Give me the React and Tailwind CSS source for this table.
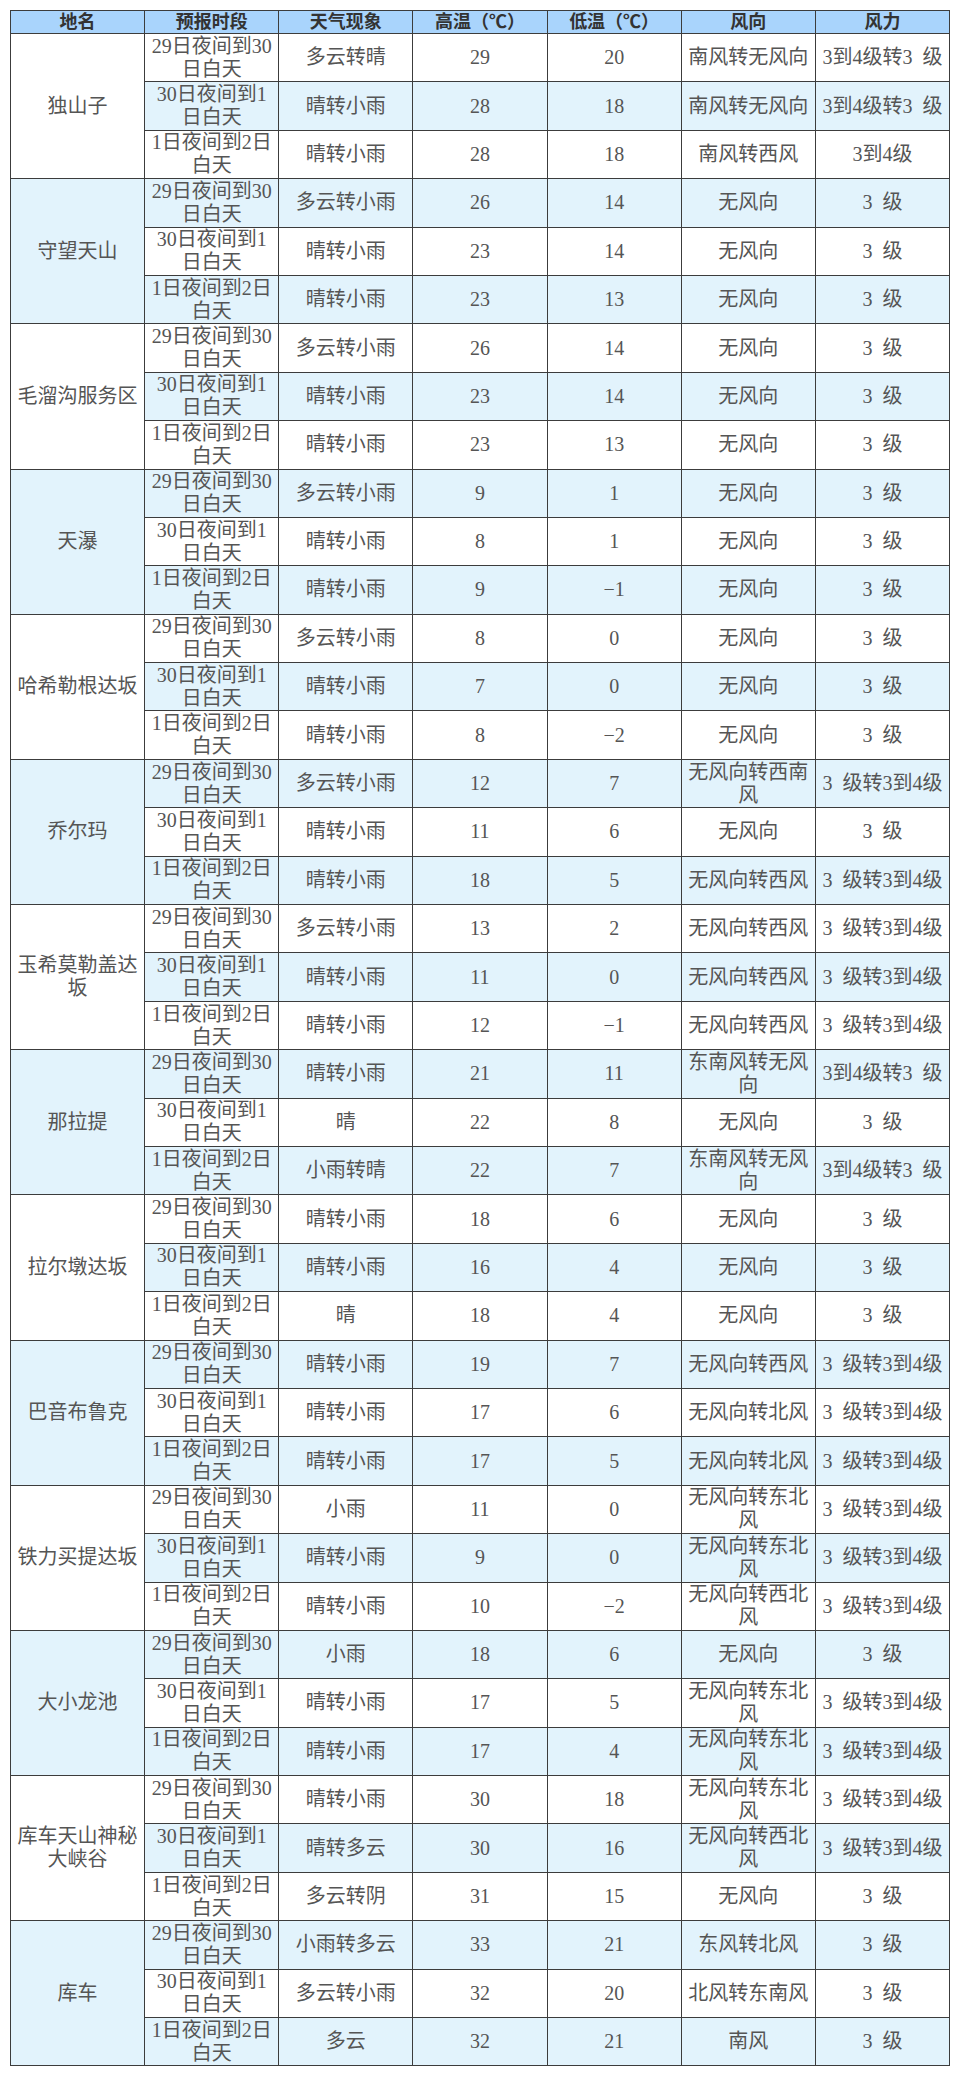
const periods = ["29日夜间到30日白天", "30日夜间到1日白天", "1日夜间到2日白天"];

const A = "3到4级转3\u2002级";
const B = "3\u2002级转3到4级";
const C = "3\u2002级";

const places = [
  ["独山子", [
    ["多云转晴", "29", "20", "南风转无风向", A],
    ["晴转小雨", "28", "18", "南风转无风向", A],
    ["晴转小雨", "28", "18", "南风转西风", "3到4级"],
  ]],
  ["守望天山", [
    ["多云转小雨", "26", "14", "无风向", C],
    ["晴转小雨", "23", "14", "无风向", C],
    ["晴转小雨", "23", "13", "无风向", C],
  ]],
  ["毛溜沟服务区", [
    ["多云转小雨", "26", "14", "无风向", C],
    ["晴转小雨", "23", "14", "无风向", C],
    ["晴转小雨", "23", "13", "无风向", C],
  ]],
  ["天瀑", [
    ["多云转小雨", "9", "1", "无风向", C],
    ["晴转小雨", "8", "1", "无风向", C],
    ["晴转小雨", "9", "−1", "无风向", C],
  ]],
  ["哈希勒根达坂", [
    ["多云转小雨", "8", "0", "无风向", C],
    ["晴转小雨", "7", "0", "无风向", C],
    ["晴转小雨", "8", "−2", "无风向", C],
  ]],
  ["乔尔玛", [
    ["多云转小雨", "12", "7", "无风向转西南风", B],
    ["晴转小雨", "11", "6", "无风向", C],
    ["晴转小雨", "18", "5", "无风向转西风", B],
  ]],
  ["玉希莫勒盖达坂", [
    ["多云转小雨", "13", "2", "无风向转西风", B],
    ["晴转小雨", "11", "0", "无风向转西风", B],
    ["晴转小雨", "12", "−1", "无风向转西风", B],
  ]],
  ["那拉提", [
    ["晴转小雨", "21", "11", "东南风转无风向", A],
    ["晴", "22", "8", "无风向", C],
    ["小雨转晴", "22", "7", "东南风转无风向", A],
  ]],
  ["拉尔墩达坂", [
    ["晴转小雨", "18", "6", "无风向", C],
    ["晴转小雨", "16", "4", "无风向", C],
    ["晴", "18", "4", "无风向", C],
  ]],
  ["巴音布鲁克", [
    ["晴转小雨", "19", "7", "无风向转西风", B],
    ["晴转小雨", "17", "6", "无风向转北风", B],
    ["晴转小雨", "17", "5", "无风向转北风", B],
  ]],
  ["铁力买提达坂", [
    ["小雨", "11", "0", "无风向转东北风", B],
    ["晴转小雨", "9", "0", "无风向转东北风", B],
    ["晴转小雨", "10", "−2", "无风向转西北风", B],
  ]],
  ["大小龙池", [
    ["小雨", "18", "6", "无风向", C],
    ["晴转小雨", "17", "5", "无风向转东北风", B],
    ["晴转小雨", "17", "4", "无风向转东北风", B],
  ]],
  ["库车天山神秘大峡谷", [
    ["晴转小雨", "30", "18", "无风向转东北风", B],
    ["晴转多云", "30", "16", "无风向转西北风", B],
    ["多云转阴", "31", "15", "无风向", C],
  ]],
  ["库车", [
    ["小雨转多云", "33", "21", "东风转北风", C],
    ["多云转小雨", "32", "20", "北风转东南风", C],
    ["多云", "32", "21", "南风", C],
  ]],
];

const headers = ["地名", "预报时段", "天气现象", "高温（℃）", "低温（℃）", "风向", "风力"];

const cell = "border border-[#3c3c3c] px-[3px] py-0 h-[48.4px] text-center align-middle";

export default function App() {
  return (
    <div
      className="bg-white w-[960px] min-h-[2084px] pt-[10px] pl-[10px] text-[#555] text-[20px] leading-[23px]"
      style={{ fontFamily: '"Liberation Serif", "Noto Sans CJK SC", serif' }}
    >
      <table className="w-[940px] table-fixed border-collapse border border-[#555]">
        <thead>
          <tr className="bg-[#a9d4fc]">
            {headers.map((h) => (
              <th
                key={h}
                className="border border-[#3c3c3c] h-[23px] p-0 text-[18px] leading-[20px] font-bold text-[#333] text-center"
              >
                {h}
              </th>
            ))}
          </tr>
        </thead>
        <tbody>
          {places.map(([name, rows], gi) =>
            rows.map((r, ri) => {
              const idx = gi * 3 + ri;
              const bg = idx % 2 === 0 ? "bg-white" : "bg-[#e2f3fc]";
              return (
                <tr key={name + ri} className={bg}>
                  {ri === 0 && (
                    <td rowSpan={3} className={cell}>
                      {name}
                    </td>
                  )}
                  <td className={cell}>{periods[ri]}</td>
                  <td className={cell}>{r[0]}</td>
                  <td className={cell}>{r[1]}</td>
                  <td className={cell}>{r[2]}</td>
                  <td className={cell}>{r[3]}</td>
                  <td className={cell + " whitespace-nowrap"}>{r[4]}</td>
                </tr>
              );
            })
          )}
        </tbody>
      </table>
    </div>
  );
}
